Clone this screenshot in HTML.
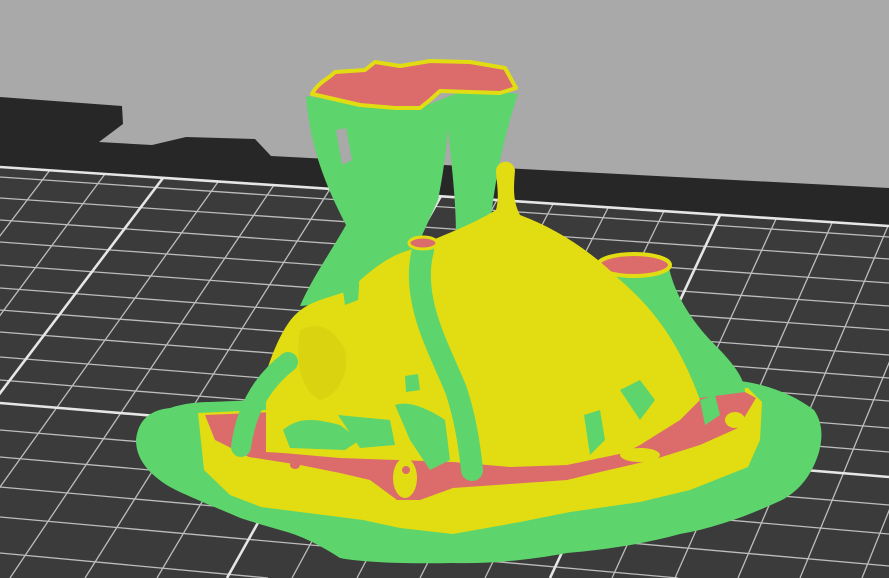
<!DOCTYPE html>
<html><head><meta charset="utf-8"><style>html,body{margin:0;padding:0;background:#a9a9a9;overflow:hidden;width:889px;height:578px}svg{display:block;position:absolute;left:0;top:0}</style></head>
<body>
<svg width="889" height="578" viewBox="0 0 889 578" xmlns="http://www.w3.org/2000/svg">
<rect width="889" height="578" fill="#a9a9a9"/>
<path d="M0,97 L122,106 L123,124 L99,142 L152,145 L186,137 L255,139 L271,156 L889,188 L889,240 L0,175 Z" fill="#272727"/>
<path d="M0,167 L889,226 L889,578 L0,578 Z" fill="#3b3b3b"/>
<g stroke="#bdbdbd" stroke-width="1.3" fill="none">
<line x1="0" y1="177" x2="889" y2="237"/>
<line x1="0" y1="198" x2="889" y2="259"/>
<line x1="0" y1="220" x2="889" y2="283"/>
<line x1="0" y1="242" x2="889" y2="306"/>
<line x1="0" y1="265" x2="889" y2="330"/>
<line x1="0" y1="288" x2="889" y2="355"/>
<line x1="0" y1="310" x2="889" y2="378"/>
<line x1="0" y1="332" x2="889" y2="401"/>
<line x1="0" y1="357" x2="889" y2="428"/>
<line x1="0" y1="380" x2="889" y2="452"/>
<line x1="0" y1="430" x2="889" y2="505"/>
<line x1="0" y1="457" x2="889" y2="534"/>
<line x1="0" y1="487" x2="889" y2="566"/>
<line x1="0" y1="517" x2="678" y2="578"/>
<line x1="0" y1="553" x2="268" y2="578"/>
<line x1="0" y1="173" x2="0" y2="173"/>
<line x1="-5" y1="167" x2="-330" y2="578"/>
<line x1="50" y1="170" x2="-260" y2="578"/>
<line x1="105" y1="174" x2="-195" y2="578"/>
<line x1="218" y1="182" x2="-65" y2="578"/>
<line x1="274" y1="185" x2="10" y2="578"/>
<line x1="330" y1="189" x2="85" y2="578"/>
<line x1="385" y1="193" x2="157" y2="578"/>
<line x1="497" y1="200" x2="292" y2="578"/>
<line x1="553" y1="204" x2="357" y2="578"/>
<line x1="608" y1="208" x2="420" y2="578"/>
<line x1="664" y1="211" x2="485" y2="578"/>
<line x1="776" y1="219" x2="612" y2="578"/>
<line x1="832" y1="223" x2="675" y2="578"/>
<line x1="888" y1="226" x2="738" y2="578"/>
<line x1="944" y1="230" x2="800" y2="578"/>
<line x1="1000" y1="234" x2="862" y2="578"/>
</g>
<g stroke="#e6e6e6" stroke-width="2.6" fill="none">
<line x1="0" y1="167" x2="889" y2="226"/>
<line x1="0" y1="403" x2="889" y2="477"/>
<line x1="163" y1="178" x2="-140" y2="578"/>
<line x1="441" y1="196" x2="227" y2="578"/>
<line x1="720" y1="215" x2="550" y2="578"/>
</g>
<path d="M136,440 C138,420 150,410 170,408 C185,403 200,402 210,402 L730,380 C760,382 790,392 814,410 C824,425 822,440 819,452 C812,475 800,490 782,500 C750,515 715,528 680,534 C640,545 600,550 567,553 C530,560 490,564 453,563 C400,564 360,562 340,558 C320,545 300,535 280,530 C260,524 245,520 238,517 C210,505 185,495 170,487 C150,475 136,460 136,440 Z" fill="#5ed46c"/>
<path d="M198,413 L748,388 L762,402 L760,440 L748,467 L690,490 L640,502 L570,512 L520,522 L453,534 L400,528 L363,520 L300,512 L261,507 L230,495 L204,470 Z" fill="#e2dd12"/>
<path d="M205,415 L745,392 L756,398 L738,428 L700,445 L652,460 L600,472 L567,480 L510,484 L453,488 L420,500 L397,500 L370,480 L340,473 L300,465 L249,457 L215,440 Z" fill="#dc6c6c"/>
<g fill="#e2dd12">
<ellipse cx="405" cy="478" rx="12" ry="20"/>
<ellipse cx="735" cy="420" rx="10" ry="8"/>
<ellipse cx="640" cy="455" rx="20" ry="7"/>
</g>
<g fill="#dc6c6c"><ellipse cx="406" cy="470" rx="4" ry="4"/><ellipse cx="295" cy="465" rx="5" ry="4"/><ellipse cx="541" cy="478" rx="5" ry="4"/></g>
<path d="M600,264 L668,262 C672,290 690,320 715,345 C735,365 745,380 745,392 L700,398 L640,390 L610,330 Z" fill="#5ed46c"/>
<ellipse cx="634" cy="265" rx="36" ry="11" fill="#dc6c6c" stroke="#e2dd12" stroke-width="4"/>
<path d="M306,96 C310,150 328,190 346,225 C332,250 312,278 300,306 L350,302 L410,262 L438,200 C444,170 446,150 448,128 C452,170 456,200 456,236 L490,226 C496,170 506,130 518,94 L470,88 L420,108 L360,104 Z" fill="#5ed46c"/>
<path d="M336,130 L346,128 L352,160 L342,165 Z" fill="#a9a9a9"/>
<path d="M312,94 C318,82 330,78 335,72 L365,70 L375,62 L400,66 L430,61 L470,62 L505,68 L516,88 L500,93 L470,92 L440,91 L430,100 L420,108 L395,108 L360,105 Z" fill="#dc6c6c" stroke="#e2dd12" stroke-width="4" stroke-linejoin="round"/>
<path d="M266,452 L266,373 C275,345 285,325 295,315 C310,300 330,298 350,290 C370,270 390,255 410,250 C440,236 470,226 496,210 C500,195 496,180 496,170 C498,160 512,158 515,170 C514,185 512,200 520,215 C555,228 590,250 620,280 C655,310 680,345 700,400 L680,420 L640,445 L624,453 L567,465 L510,467 L453,462 L397,460 L340,458 L283,453 Z" fill="#e2dd12"/>
<path d="M300,330 C320,320 335,330 345,350 C350,370 340,395 320,400 C300,390 295,360 300,330 Z" fill="#d9d40f"/>
<g fill="#5ed46c">
<path d="M345,235 C355,240 362,265 358,300 L345,305 L340,270 Z"/>
<path d="M283,430 C300,415 320,420 340,425 L360,440 L345,450 L290,448 Z"/>
<path d="M338,415 L390,420 L395,445 L360,448 Z"/>
<path d="M395,405 C410,400 430,410 445,420 L450,460 L430,470 L410,440 Z"/>
<path d="M405,376 L418,374 L420,390 L406,392 Z"/>
<path d="M584,415 L600,410 L605,440 L590,455 Z"/>
<path d="M620,390 L640,380 L655,400 L640,420 Z"/>
<path d="M700,400 L715,395 L720,415 L705,425 Z"/>
</g>
<g fill="none" stroke="#5ed46c" stroke-linecap="round">
<path d="M423,250 C410,300 440,350 456,390 C466,420 470,450 472,470" stroke-width="22"/>
<path d="M241,447 C246,410 262,382 288,362" stroke-width="20"/>
</g>
<ellipse cx="423" cy="243" rx="14" ry="6" fill="#dc6c6c" stroke="#e2dd12" stroke-width="3"/>
</svg>
</body></html>
